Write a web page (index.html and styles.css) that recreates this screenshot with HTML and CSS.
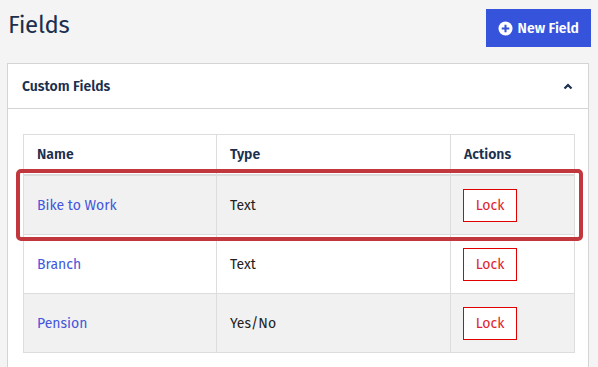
FILE: index.html
```html
<!DOCTYPE html>
<html lang="en">
<head>
  <meta charset="UTF-8">
  <title>Fields</title>
  <link rel="stylesheet" href="styles.css">
</head>
<body>
  <div class="topbar">
    <h1>Fields</h1>
    <button class="btn-new">
      <svg width="15" height="15" viewBox="0 0 16 16"><circle cx="8" cy="8" r="7.5" fill="#fff"/><path d="M8 4v8M4 8h8" stroke="#3553db" stroke-width="2.2"/></svg>
      New Field
    </button>
  </div>

  <div class="card">
    <div class="card-header">
      <span>Custom Fields</span>
      <svg width="10" height="7" viewBox="0 0 10 7"><path d="M1.5 5.5L5 2l3.5 3.5" fill="none" stroke="#1b2f4e" stroke-width="2.2"/></svg>
    </div>
    <div class="card-body">
      <div class="table-wrap">
        <table class="fields">
          <thead>
            <tr><th class="col-name">Name</th><th class="col-type">Type</th><th class="col-actions">Actions</th></tr>
          </thead>
          <tbody>
            <tr><td><a href="#">Bike to Work</a></td><td>Text</td><td><button class="btn-lock">Lock</button></td></tr>
            <tr><td><a href="#">Branch</a></td><td>Text</td><td><button class="btn-lock">Lock</button></td></tr>
            <tr><td><a href="#">Pension</a></td><td>Yes/No</td><td><button class="btn-lock">Lock</button></td></tr>
          </tbody>
        </table>
        <div class="highlight"></div>
      </div>
    </div>
  </div>
</body>
</html>
```
FILE: styles.css
```css
body { margin: 0; padding: 0 9px 0 7px; background: #f4f4f4; font-family: "Fira Sans", Lato, "Liberation Sans", sans-serif; font-size: 14px; color: #222; }
.topbar { display: flex; justify-content: space-between; align-items: flex-start; padding: 9px 0 0 1px; margin-right: -2px; height: 54px; }
h1 { margin: 0; font-size: 24px; font-weight: 400; letter-spacing: -0.3px; color: #1b2f4e; line-height: 28px; padding-top: 2px; }
.btn-new { display: flex; align-items: center; gap: 5px; height: 38px; padding: 0 12px; background: #3553db; color: #fff; border: none; font-family: inherit; font-size: 14px; font-weight: 600; }
.card { background: #fff; border: 1px solid #d4d4d4; }
.card-header { display: flex; justify-content: space-between; align-items: center; height: 44px; padding: 0 15px 0 14px; border-bottom: 1px solid #d4d4d4; font-weight: 600; color: #1b2f4e; }
.card-body { padding: 25px 13px 20px 15px; }
.table-wrap { position: relative; }
.fields { width: 552px; border-collapse: collapse; border: 1px solid #ddd; }
.fields th, .fields td { text-align: left; padding: 0 13px; border: 1px solid #ddd; }
.fields th { height: 39px; color: #1b2f4e; font-weight: 600; border-bottom-width: 2px; }
.fields td { height: 58px; }
.fields tbody tr:nth-child(odd) { background: #f1f1f1; }
.col-name { width: 166px; }
.col-type { width: 207px; }
.fields a { color: #4356dc; text-decoration: none; }
.btn-lock { width: 54px; height: 33px; background: #fff; border: 1px solid #e00000; color: #e0232e; font-family: inherit; font-size: 14px; padding: 0; margin-left: -1px; }
.highlight { position: absolute; left: -7px; top: 35px; width: 567px; height: 72px; box-sizing: border-box; border: 4px solid #c1373d; border-radius: 5px; pointer-events: none; }
```
